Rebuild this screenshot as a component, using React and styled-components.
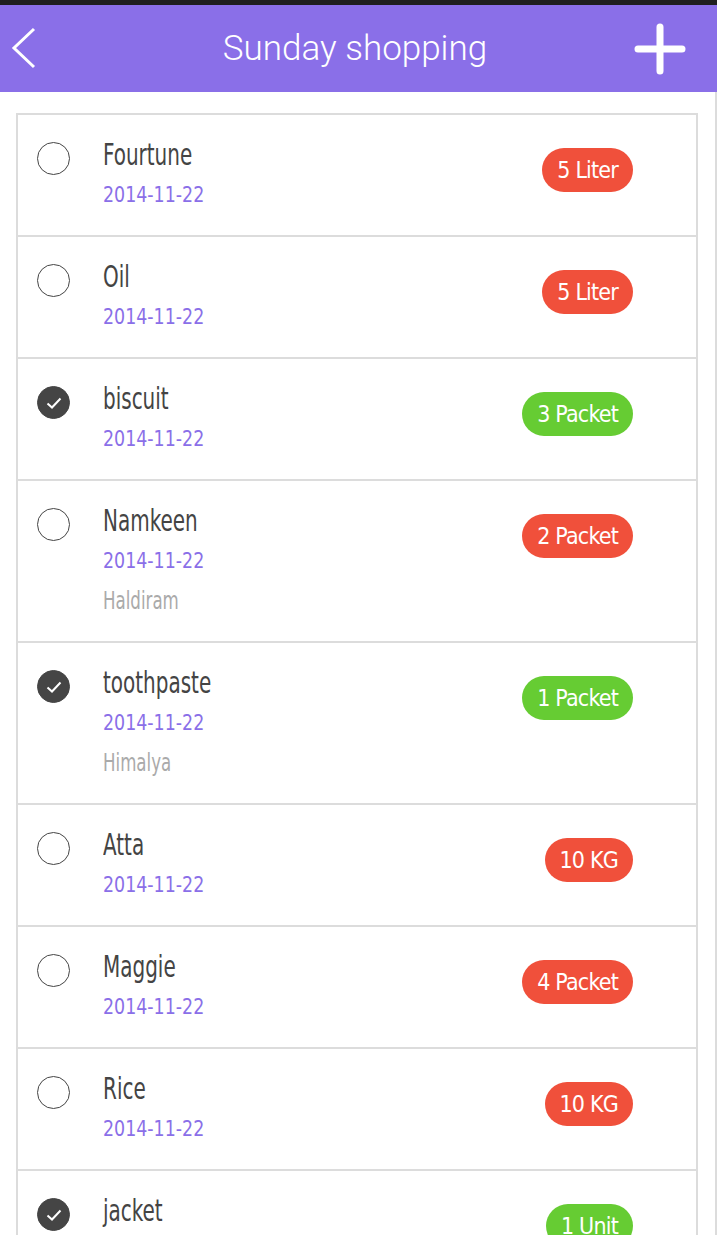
import React from 'react';
import styled, { createGlobalStyle } from 'styled-components';

const GlobalStyle = createGlobalStyle`
  html, body {
    margin: 0;
    padding: 0;
    overflow: hidden;
    background: #fff;
  }
`;

const items = [
  { name: 'Fourtune', date: '2014-11-22', qty: '5 Liter' },
  { name: 'Oil', date: '2014-11-22', qty: '5 Liter' },
  { name: 'biscuit', date: '2014-11-22', qty: '3 Packet', done: true },
  { name: 'Namkeen', date: '2014-11-22', qty: '2 Packet', brand: 'Haldiram' },
  { name: 'toothpaste', date: '2014-11-22', qty: '1 Packet', brand: 'Himalya', done: true },
  { name: 'Atta', date: '2014-11-22', qty: '10 KG' },
  { name: 'Maggie', date: '2014-11-22', qty: '4 Packet' },
  { name: 'Rice', date: '2014-11-22', qty: '10 KG' },
  { name: 'jacket', date: '2014-11-22', qty: '1 Unit', done: true },
];

export default function App() {
  return (
    <React.Fragment>
      <GlobalStyle />
      <Page>
        <StatusStrip />
        <Header>
          <IconButton aria-label="back">
            <svg width="30" height="44" viewBox="0 0 30 44">
              <polyline points="24,2 4,21 24,40" fill="none" stroke="#fff" strokeWidth="3" />
            </svg>
          </IconButton>
          <Title>Sunday shopping</Title>
          <IconButton $end aria-label="add">
            <svg width="52" height="52" viewBox="0 0 52 52">
              <path d="M26 4 V48 M4 26 H48" stroke="#fff" strokeWidth="7" strokeLinecap="round" />
            </svg>
          </IconButton>
        </Header>
        <Content>
          <List>
            {items.map((item) => (
              <Row key={item.name}>
                <Check $done={item.done}>
                  {item.done && (
                    <svg width="20" height="20" viewBox="0 0 20 20">
                      <polyline points="3.5,10.5 8,14.5 16.5,5.5" fill="none" stroke="#fff" strokeWidth="2" />
                    </svg>
                  )}
                </Check>
                <Info>
                  <Name>{item.name}</Name>
                  <DateText>{item.date}</DateText>
                  {item.brand && <Brand>{item.brand}</Brand>}
                </Info>
                <Badge $done={item.done}>{item.qty}</Badge>
              </Row>
            ))}
          </List>
        </Content>
      </Page>
    </React.Fragment>
  );
}

const Page = styled.div`
  width: 100%;
  min-height: 1235px;
  font-family: "DejaVu Sans Condensed", "DejaVu Sans", sans-serif;
`;

const StatusStrip = styled.div`
  height: 5px;
  background: #1f1f1f;
`;

const Header = styled.header`
  height: 87px;
  background: #8a6fe8;
  display: grid;
  grid-template-columns: 1fr auto 1fr;
  align-items: center;
  padding: 0 31px 0 10px;
`;

const IconButton = styled.button`
  background: none;
  border: none;
  padding: 0;
  display: flex;
  align-items: center;
  justify-self: ${(p) => (p.$end ? 'end' : 'start')};
  cursor: pointer;
`;

const Title = styled.h1`
  margin: 0 0 0 14px;
  font-family: Roboto, "Liberation Sans", sans-serif;
  font-weight: 300;
  font-size: 35px;
  color: #fff;
`;

const Content = styled.main`
  border-right: 2px solid #dcdcdc;
  padding: 21px 17px 0 16px;
`;

const List = styled.ul`
  list-style: none;
  margin: 0;
  padding: 0;
  border: 2px solid #dcdcdc;
  border-bottom: none;
`;

const Row = styled.li`
  display: flex;
  align-items: flex-start;
  padding: 20px 63px 20px 19px;
  border-bottom: 2px solid #dcdcdc;
`;

const Check = styled.span`
  box-sizing: border-box;
  width: 33px;
  height: 33px;
  margin-top: 7px;
  border-radius: 50%;
  border: 1.5px solid #444;
  background: ${(p) => (p.$done ? '#454545' : '#fff')};
  display: flex;
  align-items: center;
  justify-content: center;
  flex-shrink: 0;
`;

const Info = styled.div`
  flex: 1;
  margin-left: 33px;
  display: flex;
  flex-direction: column;
  align-items: flex-start;
`;

/* the reference uses a narrow face; squeeze the condensed DejaVu to match */
const Name = styled.span`
  display: inline-block;
  font-size: 30px;
  line-height: 40px;
  color: #444;
  transform: scaleX(0.74);
  transform-origin: left center;
`;

const DateText = styled.span`
  display: inline-block;
  font-size: 22px;
  line-height: 40px;
  color: #8a6fe8;
  transform: scaleX(0.88);
  transform-origin: left center;
`;

const Brand = styled.span`
  display: inline-block;
  font-size: 25px;
  line-height: 40px;
  color: #aaa;
  transform: scaleX(0.74);
  transform-origin: left center;
`;

const Badge = styled.span`
  margin-top: 13px;
  height: 44px;
  line-height: 44px;
  padding: 0 15px;
  border-radius: 22px;
  background: ${(p) => (p.$done ? '#66cc33' : '#f0503b')};
  color: #fff;
  font-size: 23px;
  letter-spacing: -0.8px;
  white-space: nowrap;
`;
